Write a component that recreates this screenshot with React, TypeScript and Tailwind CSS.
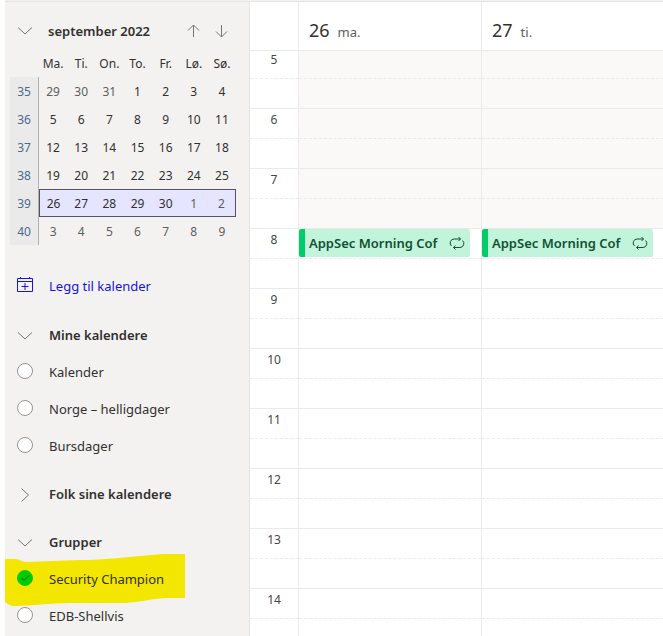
import React from "react";

const weekdays = ["Ma.", "Ti.", "On.", "To.", "Fr.", "Lø.", "Sø."];

type Week = { no: number; days: number[]; muted: number[]; selected?: boolean };

const weeks: Week[] = [
  { no: 35, days: [29, 30, 31, 1, 2, 3, 4], muted: [0, 1, 2] },
  { no: 36, days: [5, 6, 7, 8, 9, 10, 11], muted: [] },
  { no: 37, days: [12, 13, 14, 15, 16, 17, 18], muted: [] },
  { no: 38, days: [19, 20, 21, 22, 23, 24, 25], muted: [] },
  { no: 39, days: [26, 27, 28, 29, 30, 1, 2], muted: [5, 6], selected: true },
  { no: 40, days: [3, 4, 5, 6, 7, 8, 9], muted: [0, 1, 2, 3, 4, 5, 6] },
];

const hours = [5, 6, 7, 8, 9, 10, 11, 12, 13, 14];
const days = [
  { date: 26, name: "ma." },
  { date: 27, name: "ti." },
];

function Chevron({ right = false }: { right?: boolean }) {
  return (
    <svg viewBox="0 0 16 16" className="size-4 shrink-0" fill="none" stroke="#797775" strokeWidth="1" aria-hidden="true">
      <path d={right ? "M4.500 1.500 11.500 8l-7 6.500" : "M1 4.500 8 11l7-6.500"} />
    </svg>
  );
}

function Arrow({ down = false }: { down?: boolean }) {
  return (
    <svg viewBox="0 0 14 14" className="size-3.5" fill="none" stroke="#797775" strokeWidth="1" aria-hidden="true">
      <path d={down ? "M6.500 1v12M1 7.500 6.500 13l5.500-5.500" : "M6.500 13V1M1 6.500 6.500 1l5.500 5.500"} />
    </svg>
  );
}

function MonthPicker() {
  return (
    <div>
      <div className="flex h-7 items-center pl-3 pr-5">
        <button type="button" aria-label="Skjul kalender">
          <Chevron />
        </button>
        <h2 className="ml-[15px] flex-1 pt-0.5 text-[13px] font-semibold">september 2022</h2>
        <button type="button" aria-label="Forrige måned" className="mr-3.5">
          <Arrow />
        </button>
        <button type="button" aria-label="Neste måned">
          <Arrow down />
        </button>
      </div>
      <table className="ml-[5px] mt-1 w-[226px] table-fixed border-separate border-spacing-0 text-center">
        <thead>
          <tr className="h-7 text-xs">
            <th className="w-[29px] p-0" aria-label="Uke" />
            {weekdays.map((d) => (
              <th key={d} className="p-0 pt-0.5 font-normal">{d}</th>
            ))}
          </tr>
        </thead>
        <tbody className="text-xs">
          {weeks.map((w) => (
            <tr key={w.no} className="h-7">
              <th className="border-r border-[#b3b0ad] bg-[#eaeaea] p-0 pt-0.5 font-normal text-[#4a6c8c]">{w.no}</th>
              {w.days.map((d, i) => (
                <td
                  key={i}
                  className={[
                    "p-0 pt-0.5",
                    w.muted.includes(i) ? "text-[#605e5c]" : "",
                    w.selected ? "border-y border-[#55535f] bg-[#e5e5ff]" : "",
                    w.selected && i === 0 ? "border-l" : "",
                    w.selected && i === 6 ? "border-r" : "",
                  ].join(" ")}
                >
                  {d}
                </td>
              ))}
            </tr>
          ))}
        </tbody>
      </table>
    </div>
  );
}

function SectionHeading({ title, closed = false }: { title: string; closed?: boolean }) {
  return (
    <button type="button" className="mt-3 flex h-9 w-full items-center gap-4 pl-3 text-left text-[13px] font-semibold">
      <Chevron right={closed} />
      <span>{title}</span>
    </button>
  );
}

function CalendarItem({ name, checked = false }: { name: string; checked?: boolean }) {
  return (
    <label className="relative flex h-[37px] shrink-0 items-center gap-4 pl-3">
      {checked && (
        <svg viewBox="0 0 180 54" className="absolute -top-[7px] left-0 h-[54px] w-[180px]" fill="#f3e600" aria-hidden="true">
          <path d="M0 5h10c5 0 6 3 11 3l54-2c20 0 38-2 60-4l23-2h32v44h-28c-12 0-25 4-42 5H65c-20 0-40 3-55 3-5 0-7-2-10-4z" />
        </svg>
      )}
      <span className="relative mb-[3px] flex size-4">
        <input
          type="checkbox"
          defaultChecked={checked}
          className="size-4 appearance-none rounded-full border border-[#979593] bg-white checked:border-[#00cc00] checked:bg-[#00cc00]"
        />
        {checked && (
          <svg viewBox="0 0 16 16" className="pointer-events-none absolute inset-0 size-4" fill="none" stroke="#20581c" strokeWidth="1" aria-hidden="true">
            <path d="M4.500 8 7 10.500l5-5" />
          </svg>
        )}
      </span>
      <span className="relative text-[13px]">{name}</span>
    </label>
  );
}

function Sidebar() {
  return (
    <aside className="w-[245px] shrink-0 border-r border-[#e6e4e2] bg-[#f3f2f1] pt-[15px]">
      <MonthPicker />
      <a href="#legg-til" className="mb-3.5 mt-6 flex h-[35px] items-center gap-4 pl-3 text-[13px] text-[#1515d8]">
        <svg viewBox="0 0 16 16" className="mb-[3px] size-4 shrink-0" fill="none" stroke="currentColor" strokeWidth="1" aria-hidden="true">
          <path d="M.5 1.500h15v13H.5zM.5 4.500h15M3.500 0v2M12.500 0v2M8 6v7M4.500 9.500h7" />
        </svg>
        <span>Legg til kalender</span>
      </a>
      <SectionHeading title="Mine kalendere" />
      <CalendarItem name="Kalender" />
      <CalendarItem name="Norge – helligdager" />
      <CalendarItem name="Bursdager" />
      <SectionHeading title="Folk sine kalendere" closed />
      <SectionHeading title="Grupper" />
      <CalendarItem name="Security Champion" checked />
      <CalendarItem name="EDB-Shellvis" />
    </aside>
  );
}

function EventCard() {
  return (
    <button
      type="button"
      className="mr-[11px] flex h-7 items-center overflow-hidden rounded-xs border-l-6 border-[#00cc6a] bg-[#c2f4dc] pl-1 pr-[5px] text-left text-[13px] font-semibold text-[#0f5132]"
    >
      <span className="min-w-0 flex-1 whitespace-nowrap pt-0.5">AppSec Morning Cof</span>
      <svg viewBox="0 0 16 16" className="size-4 shrink-0" fill="none" stroke="currentColor" strokeWidth="1" aria-hidden="true">
        <path d="M2.500 11A4 4 0 0 1 5 4h6.500M9.500 2l2 2-2 2M13.500 5.500A4 4 0 0 1 11 12.500H4.500M6.500 10.500l-2 2 2 2" />
      </svg>
    </button>
  );
}

function Schedule() {
  return (
    <main className="-mr-0.5 min-w-0 flex-1 overflow-hidden">
      <header className="flex h-[49px] border-b border-[#eaeaea]">
        <div className="w-[49px] shrink-0 border-r border-[#eaeaea]" />
        {days.map((d) => (
          <div key={d.date} className="flex flex-1 items-baseline gap-2 border-r border-[#eaeaea] pl-2.5 pt-3.5">
            <span className="text-lg">{d.date}</span>
            <span className="text-[13px] text-[#605e5c]">{d.name}</span>
          </div>
        ))}
      </header>
      {hours.map((h, i) => (
        <div key={h} className={i === 0 ? "flex h-[58px]" : "flex h-[60px]"}>
          <div className="flex w-[49px] shrink-0 flex-col border-r border-[#eaeaea] text-center text-xs text-[#484644]">
            <div className={i === 0 ? "h-7 border-b border-dashed border-[#eaeaea] pt-px" : "h-[30px] border-b border-dashed border-[#eaeaea] pt-[3px]"}>
              {h}
            </div>
            <div className="flex-1 border-b border-[#eaeaea]" />
          </div>
          {days.map((d) => (
            <div key={d.date} className={h < 8 ? "flex min-w-0 flex-1 flex-col border-r border-[#eaeaea] bg-[#faf9f8]" : "flex min-w-0 flex-1 flex-col border-r border-[#eaeaea]"}>
              <div className={i === 0 ? "h-7 border-b border-dashed border-[#eaeaea]" : "flex h-[30px] flex-col border-b border-dashed border-[#eaeaea]"}>
                {h === 8 && <EventCard />}
              </div>
              <div className="flex-1 border-b border-[#eaeaea]" />
            </div>
          ))}
        </div>
      ))}
    </main>
  );
}

export default function App() {
  return (
    <div className="flex h-screen flex-col overflow-hidden bg-white pl-[5px] font-['Noto_Sans','Open_Sans',sans-serif] text-[#323130]">
      <div className="h-0.5 shrink-0 border-b border-[#e6e4e2] bg-[#f3f2f1]" />
      <div className="flex min-h-0 flex-1">
        <Sidebar />
        <Schedule />
      </div>
    </div>
  );
}
